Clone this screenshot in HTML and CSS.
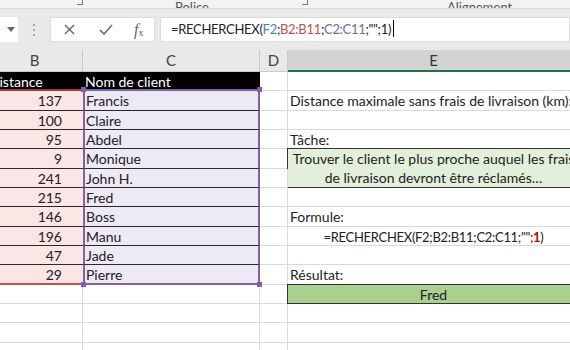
FILE: index.html
```html
<!DOCTYPE html>
<html lang="fr">
<head>
    <meta charset="UTF-8">
    <title>RECHERCHEX</title>
    <link rel="stylesheet" href="styles.css">
</head>
<body>
    <div class="ribbon">
        <span class="launcher launcher-1"></span>
        <span class="group-label police">Police</span>
        <span class="launcher launcher-2"></span>
        <span class="group-label align">Alignement</span>
    </div>

    <div class="formula-bar">
        <div class="name-box">
            <svg class="caret-down" viewBox="0 0 8 5"><path d="M0 0h8L4 5z"/></svg>
        </div>
        <div class="grip"><i></i><i></i><i></i></div>
        <div class="fx-buttons">
            <svg class="btn-icon cancel" viewBox="0 0 12 12"><path d="M1 1l10 10M11 1L1 11"/></svg>
            <svg class="btn-icon enter" viewBox="0 0 14 11"><path d="M1 6l4 4 8-9"/></svg>
            <span class="fx"><i>f</i><sub>x</sub></span>
        </div>
        <div class="formula-input formula-text">
            =RECHERCHEX(<span class="ref-blue">F2</span>;<span class="ref-red">B2:B11</span>;<span class="ref-purple">C2:C11</span>;"";1)<span class="text-cursor"></span>
        </div>
    </div>

    <div class="sheet">
        <!-- en-têtes de colonnes -->
        <div class="col-head">B</div>
        <div class="col-head">C</div>
        <div class="col-head">D</div>
        <div class="col-head selected">E</div>

        <!-- ligne 1 -->
        <div class="cell title title-b">Distance</div>
        <div class="cell title title-c">Nom de client</div>
        <div class="cell"></div>
        <div class="cell"></div>

        <div class="cell dist">137</div>
        <div class="cell client first">Francis</div>
        <div class="cell"></div>
        <div class="cell">Distance maximale sans frais de livraison (km):</div>

        <div class="cell dist">100</div>
        <div class="cell client">Claire</div>
        <div class="cell"></div>
        <div class="cell"></div>

        <div class="cell dist">95</div>
        <div class="cell client">Abdel</div>
        <div class="cell"></div>
        <div class="cell">Tâche:</div>

        <div class="cell dist">9</div>
        <div class="cell client">Monique</div>
        <div class="cell"></div>
        <div class="cell box task">Trouver le client le plus proche auquel les frais<br>de livraison devront être réclamés…</div>

        <div class="cell dist">241</div>
        <div class="cell client">John H.</div>
        <div class="cell"></div>

        <div class="cell dist">215</div>
        <div class="cell client">Fred</div>
        <div class="cell"></div>
        <div class="cell"></div>

        <div class="cell dist">146</div>
        <div class="cell client">Boss</div>
        <div class="cell"></div>
        <div class="cell">Formule:</div>

        <div class="cell dist">196</div>
        <div class="cell client">Manu</div>
        <div class="cell"></div>
        <div class="cell center formula-text">=RECHERCHEX(F2;B2:B11;C2:C11;"";<b class="arg-red">1</b>)</div>

        <div class="cell dist">47</div>
        <div class="cell client">Jade</div>
        <div class="cell"></div>
        <div class="cell"></div>

        <div class="cell dist last">29</div>
        <div class="cell client last">Pierre</div>
        <div class="cell"></div>
        <div class="cell">Résultat:</div>

        <div class="cell"></div>
        <div class="cell"></div>
        <div class="cell"></div>
        <div class="cell box result">Fred</div>

        <div class="cell"></div>
        <div class="cell"></div>
        <div class="cell"></div>
        <div class="cell"></div>

        <div class="cell"></div>
        <div class="cell"></div>
        <div class="cell"></div>
        <div class="cell"></div>

        <div class="cell"></div>
        <div class="cell"></div>
        <div class="cell"></div>
        <div class="cell"></div>
    </div>
</body>
</html>
```

FILE: styles.css
```css
* {
    margin: 0;
    padding: 0;
    box-sizing: border-box;
}

body {
    width: 570px;
    height: 350px;
    overflow: hidden;
    background: #ffffff;
    font-family: Lato, "Liberation Sans", sans-serif;
    color: #222;
}

/* ruban (coupé en haut) */
.ribbon {
    height: 9px;
    background: #f3f3f3;
    border-bottom: 1px solid #dadada;
    display: flex;
    align-items: flex-end;
    overflow: hidden;
}

.group-label {
    font-size: 13px;
    line-height: 13px;
    color: #555;
    margin-bottom: -6px;
}

.police {
    margin-left: 92px;
}

.align {
    margin-left: 139px;
}

.launcher {
    width: 6px;
    height: 6px;
    border-right: 1px solid #777;
    border-bottom: 1px solid #777;
    margin-bottom: 3px;
}

.launcher-1 {
    margin-left: 77px;
}

.launcher-2 {
    margin-left: 93px;
}

/* barre de formule */
.formula-bar {
    height: 41px;
    background: #e9e9e9;
    display: flex;
    align-items: flex-start;
    padding-top: 8px;
}

.name-box {
    width: 18px;
    height: 25px;
    background: #fff;
    display: flex;
    align-items: center;
    justify-content: center;
    padding-left: 4px;
}

.caret-down {
    width: 8px;
    height: 5px;
    fill: #666;
}

.grip {
    width: 32px;
    height: 25px;
    display: flex;
    flex-direction: column;
    align-items: center;
    justify-content: center;
    gap: 3px;
}

.grip i {
    width: 2px;
    height: 2px;
    background: #aaa;
}

.fx-buttons {
    width: 105px;
    height: 25px;
    background: #fff;
    border: 1px solid #dcdcdc;
    display: flex;
    align-items: center;
    padding-left: 13px;
}

.btn-icon {
    fill: none;
    stroke: #6a6a6a;
    stroke-width: 1.6;
}

.cancel {
    width: 11px;
    height: 11px;
}

.enter {
    width: 14px;
    height: 11px;
    margin-left: 24px;
}

.fx {
    margin-left: 21px;
    font-family: "Liberation Serif", serif;
    font-size: 16px;
    color: #666;
    line-height: 1;
}

.fx sub {
    font-size: 10px;
    vertical-align: -1px;
}

.formula-input {
    flex: 1;
    height: 25px;
    margin-left: 5px;
    background: #fff;
    border: 1px solid #dcdcdc;
    line-height: 23px;
    padding-left: 10px;
    color: #222;
    white-space: nowrap;
}

.formula-text,
.cell.formula-text {
    font-size: 13px;
    letter-spacing: -0.3px;
}

.ref-blue {
    color: #4f81bd;
}

.ref-red {
    color: #c0504d;
}

.ref-purple {
    color: #8064a2;
}

.text-cursor {
    display: inline-block;
    width: 1px;
    height: 17px;
    background: #000;
    vertical-align: -3px;
    margin-left: 2px;
}

/* feuille */
.sheet {
    display: grid;
    grid-template-columns: 96px 177px 28px 292px;
    grid-template-rows: 22px repeat(15, 19.35px);
    margin-left: -13px;
}

.col-head {
    background: #e9e9e9;
    border-right: 1px solid #c9c9c9;
    border-bottom: 1px solid #c9c9c9;
    text-align: center;
    font-size: 15px;
    line-height: 21px;
    color: #444;
}

.col-head.selected {
    background: #d3d3d3;
    border-bottom: 2px solid #217346;
    color: #333;
}

.cell {
    border-right: 1px solid #dadada;
    border-bottom: 1px solid #dadada;
    font-size: 14px;
    line-height: 18px;
    padding: 1px 2px 0;
    white-space: nowrap;
    overflow: hidden;
}

.cell.formula-text {
    font-size: 13px;
    letter-spacing: -0.3px;
}

.title {
    background: #000;
    color: #fff;
    border-right: none;
}

.title-b {
    border-bottom: 2px solid #9a3b38;
}

.title-c {
    border-bottom: 2px solid #7e62a6;
    padding-left: 2px;
}

.dist {
    background: #fbe5e5;
    text-align: right;
    padding-right: 21px;
    border-right: none;
    border-bottom: 1px solid #2a2a2a;
}

.dist.last {
    border-bottom: 2px solid #c8504c;
}

.client {
    position: relative;
    overflow: visible;
    background: #ede9f5;
    border-left: 2px solid #8064a2;
    border-right: 2px solid #8064a2;
    border-bottom: 1px solid #2a2a2a;
    padding-left: 1px;
}

.client.last {
    border-bottom: 2px solid #8064a2;
}

.client.first::before,
.client.first::after,
.client.last::before,
.client.last::after {
    content: "";
    position: absolute;
    width: 5px;
    height: 5px;
    background: #7e5fa8;
}

.client.first::before {
    left: -4px;
    top: -4px;
}

.client.first::after {
    right: -4px;
    top: -4px;
}

.client.last::before {
    left: -4px;
    bottom: -4px;
}

.client.last::after {
    right: -4px;
    bottom: -4px;
}

.center {
    text-align: center;
}

.arg-red {
    color: #c00000;
}

.box {
    margin: -1px 0 0 -1px;
    border: 1px solid #333;
    text-align: center;
}

.task {
    grid-row: span 2;
    background: #e2efda;
    line-height: 19px;
    padding-top: 0;
}

.result {
    background: #a9d08e;
}
```
